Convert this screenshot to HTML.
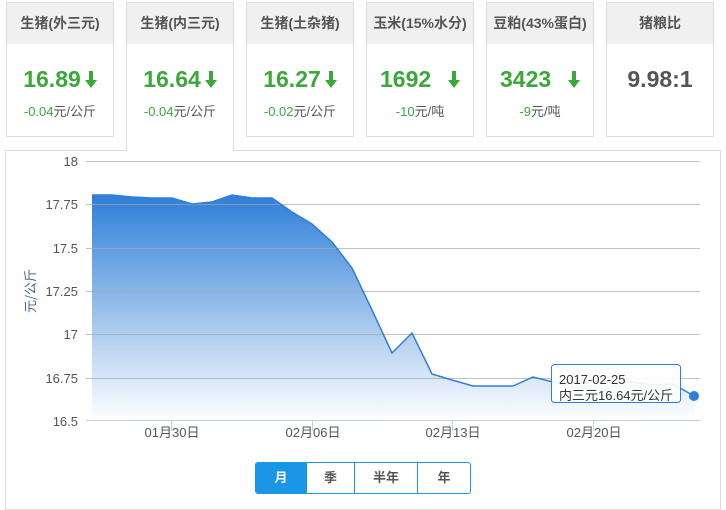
<!DOCTYPE html><html><head><meta charset="utf-8"><style>
body{margin:0;width:726px;height:499px;background:#fff;font-family:"Liberation Sans","Noto Sans CJK SC",sans-serif;position:relative;overflow:hidden}
.c{position:absolute;top:2px;width:108px;height:135px;border:1px solid #ddd;background:#fff;box-sizing:border-box}
.c .h{height:41px;background:#f0f0f0;text-align:center;line-height:41px;font-size:14px;font-weight:bold;color:#555}
.c .v{text-align:center;font-size:23px;font-weight:bold;color:#3aa83a;margin-top:22px;height:26px;line-height:26px}
.c .d{text-align:center;font-size:13px;color:#555;margin-top:9px}
.c .d b{font-weight:normal;color:#3aa83a}
.ar{display:inline-block;width:12px;height:17px;vertical-align:-1px;margin-left:4px}
.act{height:149px;border-bottom:none;z-index:3}
.panel{position:absolute;left:5px;top:150px;width:716px;height:360px;border:1px solid #ddd;box-sizing:border-box;z-index:1}
.btns{position:absolute;left:255px;top:462px;height:30px;border:1px solid #1a96e6;border-radius:3px;display:flex;z-index:4;overflow:hidden}
.btns div{height:30px;line-height:30px;text-align:center;font-size:13px;font-weight:bold;color:#555;border-left:1px solid #1a96e6;box-sizing:border-box}
</style></head><body>
<div class="panel"></div>
<div class="c" style="left:6px"><div class="h">生猪(外三元)</div><div class="v">16.89<svg class="ar" viewBox="0 0 12 17"><path d="M4 0h4v9h4l-6 8-6-8h4z" fill="#3aa83a"/></svg></div><div class="d"><b>-0.04</b>元/公斤</div></div>
<div class="c act" style="left:126px"><div class="h">生猪(内三元)</div><div class="v">16.64<svg class="ar" viewBox="0 0 12 17"><path d="M4 0h4v9h4l-6 8-6-8h4z" fill="#3aa83a"/></svg></div><div class="d"><b>-0.04</b>元/公斤</div></div>
<div class="c" style="left:246px"><div class="h">生猪(土杂猪)</div><div class="v">16.27<svg class="ar" viewBox="0 0 12 17"><path d="M4 0h4v9h4l-6 8-6-8h4z" fill="#3aa83a"/></svg></div><div class="d"><b>-0.02</b>元/公斤</div></div>
<div class="c" style="left:366px"><div class="h">玉米(15%水分)</div><div class="v">1692 &nbsp;<svg class="ar" viewBox="0 0 12 17"><path d="M4 0h4v9h4l-6 8-6-8h4z" fill="#3aa83a"/></svg></div><div class="d"><b>-10</b>元/吨</div></div>
<div class="c" style="left:486px"><div class="h">豆粕(43%蛋白)</div><div class="v">3423 &nbsp;<svg class="ar" viewBox="0 0 12 17"><path d="M4 0h4v9h4l-6 8-6-8h4z" fill="#3aa83a"/></svg></div><div class="d"><b>-9</b>元/吨</div></div>
<div class="c" style="left:606px"><div class="h">猪粮比</div><div class="v" style="color:#555">9.98:1</div></div>
<svg style="position:absolute;left:0;top:0;z-index:2" width="726" height="499">
<defs><linearGradient id="g" x1="0" y1="0" x2="0" y2="1"><stop offset="0" stop-color="#2f7ed8"/><stop offset="1" stop-color="#2f7ed8" stop-opacity="0"/></linearGradient></defs>
<path d="M92 195L112 195L132 197L152 198L172 198L192 204L212 202L232 195L252 198L272 198L292 212L312 224L332 242L352 268L372 310L392 353L412 333L432 374L452 380L473 386L493 386L513 386L533 377L553 382L573 383L593 382L613 382L633 382L653 385L673 384L694 396L694 421L92 421Z" fill="url(#g)"/>
<g stroke="#a8a8a8" stroke-opacity="0.7" stroke-width="1">
<line x1="86" x2="700" y1="161.5" y2="161.5"/><line x1="86" x2="700" y1="204.5" y2="204.5"/><line x1="86" x2="700" y1="248.5" y2="248.5"/><line x1="86" x2="700" y1="291.5" y2="291.5"/><line x1="86" x2="700" y1="334.5" y2="334.5"/><line x1="86" x2="700" y1="378.5" y2="378.5"/></g>
<path d="M92 195L112 195L132 197L152 198L172 198L192 204L212 202L232 195L252 198L272 198L292 212L312 224L332 242L352 268L372 310L392 353L412 333L432 374L452 380L473 386L493 386L513 386L533 377L553 382L573 383L593 382L613 382L633 382L653 385L673 384L694 396" fill="none" stroke="#2f7ed8" stroke-width="1.5"/>
<line x1="86" x2="700" y1="420.5" y2="420.5" stroke="#c0d0e0"/>
<g stroke="#c0d0e0"><line x1="171.5" x2="171.5" y1="421" y2="431"/><line x1="312.5" x2="312.5" y1="421" y2="431"/><line x1="452.5" x2="452.5" y1="421" y2="431"/><line x1="593.5" x2="593.5" y1="421" y2="431"/></g>
<circle cx="694" cy="396" r="5" fill="#2f7ed8"/>
<g font-size="13" fill="#555" text-anchor="end" font-family="Liberation Sans,sans-serif">
<text x="78" y="166">18</text><text x="78" y="209">17.75</text><text x="78" y="253">17.5</text><text x="78" y="296">17.25</text><text x="78" y="339">17</text><text x="78" y="383">16.75</text><text x="78" y="426">16.5</text></g>
<g font-size="13" fill="#555" text-anchor="middle" font-family="Liberation Sans,Noto Sans CJK SC,sans-serif">
<text x="172" y="437">01月30日</text><text x="313" y="437">02月06日</text><text x="453" y="437">02月13日</text><text x="594" y="437">02月20日</text></g>
<text transform="translate(35,291) rotate(-90)" text-anchor="middle" font-size="13" fill="#4a6a8a" font-family="Noto Sans CJK SC,sans-serif">元/公斤</text>
<rect x="551.5" y="364.5" width="129" height="38" rx="3" fill="#fff" fill-opacity="0.9" stroke="#2f7ed8"/>
<g font-size="13" fill="#333" font-family="Liberation Sans,Noto Sans CJK SC,sans-serif"><text x="559" y="384">2017-02-25</text><text x="559" y="400">内三元16.64元/公斤</text></g>
</svg>
<div class="btns"><div style="width:50px;background:#1a96e6;color:#fff;border-left:none">月</div><div style="width:48px">季</div><div style="width:63px">半年</div><div style="width:53px">年</div></div>
</body></html>
